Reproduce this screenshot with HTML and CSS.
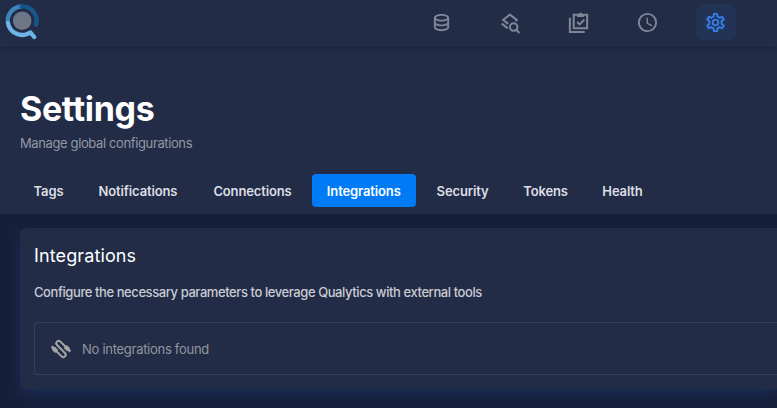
FILE: index.html
```html
<!DOCTYPE html>
<html lang="en">
<head>
<meta charset="utf-8">
<title>Settings</title>
<link rel="stylesheet" href="styles.css">
</head>
<body>
<header class="topbar">
  <svg class="logo" viewBox="0 0 44 44" fill="none" stroke-width="4.3">
    <defs><linearGradient id="core" x1="0" y1="0" x2="1" y2="1"><stop offset="0" stop-color="#66758d"/><stop offset="1" stop-color="#737780"/></linearGradient></defs>
    <circle cx="22.2" cy="20.7" r="9.3" fill="url(#core)"/>
    <path d="M8 23.2A14.2 14.2 0 0 1 21.5 6.5" stroke="#3e84bd"/>
    <path d="M21.5 6.5A14.2 14.2 0 0 1 36 24.8" stroke="#15578b" stroke-linecap="round"/>
    <path d="M8 23.2A14.2 14.2 0 0 0 26.5 34.2L30.5 32.5L34.2 37" stroke="#6eb5ea" stroke-linecap="round" stroke-linejoin="round"/>
  </svg>
  <nav class="nav">
    <a class="nav-item"><svg class="icon" viewBox="0 0 24 24"><path d="M12 3C7.58 3 4 4.79 4 7V17C4 19.21 7.59 21 12 21S20 19.21 20 17V7C20 4.79 16.42 3 12 3M18 17C18 17.5 15.87 19 12 19S6 17.5 6 17V14.77C7.61 15.55 9.72 16 12 16S16.39 15.55 18 14.77V17M18 12.45C16.7 13.4 14.42 14 12 14C9.58 14 7.3 13.4 6 12.45V9.64C7.47 10.47 9.61 11 12 11C14.39 11 16.53 10.47 18 9.64V12.45M12 9C8.13 9 6 7.5 6 7S8.13 5 12 5C15.87 5 18 6.5 18 7S15.87 9 12 9Z"/></svg></a>
    <a class="nav-item"><svg class="icon line" viewBox="0 0 24 24"><path d="M9.6 13.4L4.3 9.3L11.4 3.8L18.6 9.3L17.2 10.4M2.9 13.2L9.2 18.1"/><circle cx="15.3" cy="16.8" r="3.9"/><path d="M18 19.5L21.4 22.9"/></svg></a>
    <a class="nav-item"><svg class="icon line" viewBox="0 0 24 24"><path d="M7 4H21V18H7ZM3 7V22H18.5M10.6 11.4L13.2 14L18 9.2"/><path class="solid" d="M10.5 3H12.2A2 2 0 0 1 15.8 3H17.5V6.3H10.5Z"/></svg></a>
    <a class="nav-item"><svg class="icon" viewBox="0 0 24 24"><path d="M12,20A8,8 0 0,0 20,12A8,8 0 0,0 12,4A8,8 0 0,0 4,12A8,8 0 0,0 12,20M12,2A10,10 0 0,1 22,12A10,10 0 0,1 12,22C6.47,22 2,17.5 2,12A10,10 0 0,1 12,2M12.5,7V12.25L17,14.92L16.25,16.15L11,13V7H12.5Z"/></svg></a>
    <a class="nav-item active"><svg class="icon" viewBox="0 0 24 24"><path d="M12,8A4,4 0 0,1 16,12A4,4 0 0,1 12,16A4,4 0 0,1 8,12A4,4 0 0,1 12,8M12,10A2,2 0 0,0 10,12A2,2 0 0,0 12,14A2,2 0 0,0 14,12A2,2 0 0,0 12,10M10,22C9.75,22 9.54,21.82 9.5,21.58L9.13,18.93C8.5,18.68 7.96,18.34 7.44,17.94L4.95,18.95C4.73,19.03 4.46,18.95 4.34,18.73L2.34,15.27C2.21,15.05 2.27,14.78 2.46,14.63L4.57,12.97L4.5,12L4.57,11L2.46,9.37C2.27,9.22 2.21,8.95 2.34,8.73L4.34,5.27C4.46,5.05 4.73,4.96 4.95,5.05L7.44,6.05C7.96,5.66 8.5,5.32 9.13,5.07L9.5,2.42C9.54,2.18 9.75,2 10,2H14C14.25,2 14.46,2.18 14.5,2.42L14.87,5.07C15.5,5.32 16.04,5.66 16.56,6.05L19.05,5.05C19.27,4.96 19.54,5.05 19.66,5.27L21.66,8.73C21.79,8.95 21.73,9.22 21.54,9.37L19.43,11L19.5,12L19.43,13L21.54,14.63C21.73,14.78 21.79,15.05 21.66,15.27L19.66,18.73C19.54,18.95 19.27,19.04 19.05,18.95L16.56,17.95C16.04,18.34 15.5,18.68 14.87,18.93L14.5,21.58C14.46,21.82 14.25,22 14,22H10M11.25,4L10.88,6.61C9.68,6.86 8.62,7.5 7.85,8.39L5.44,7.35L4.69,8.65L6.8,10.2C6.4,11.37 6.4,12.64 6.8,13.8L4.68,15.36L5.43,16.66L7.86,15.62C8.63,16.5 9.68,17.14 10.87,17.38L11.24,20H12.76L13.13,17.39C14.32,17.14 15.37,16.5 16.14,15.62L18.57,16.66L19.32,15.36L17.2,13.81C17.6,12.64 17.6,11.37 17.2,10.2L19.31,8.65L18.56,7.35L16.15,8.39C15.38,7.5 14.32,6.86 13.12,6.62L12.75,4H11.25Z"/></svg></a>
  </nav>
</header>
<section class="heading">
  <h1>Settings</h1>
  <p class="subtitle">Manage global configurations</p>
  <nav class="tabs">
    <a class="tab">Tags</a>
    <a class="tab">Notifications</a>
    <a class="tab">Connections</a>
    <a class="tab selected">Integrations</a>
    <a class="tab">Security</a>
    <a class="tab">Tokens</a>
    <a class="tab">Health</a>
  </nav>
</section>
<main class="content">
  <section class="card">
    <h2>Integrations</h2>
    <p class="description">Configure the necessary parameters to leverage Qualytics with external tools</p>
    <div class="empty">
      <svg class="cable" viewBox="-11 -11 22 22"><g transform="rotate(-45)"><path class="cord" d="M4.8 2V-5.6A2.4 2.4 0 0 0 0 -5.6V5.6A2.4 2.4 0 0 1 -4.8 5.6V-2"/><path d="M2.6 1.2H7V5.6L6.1 6.5V8.4H3.5V6.5L2.6 5.6ZM-2.6 -1.2H-7V-5.6L-6.1 -6.5V-8.4H-3.5V-6.5L-2.6 -5.6Z"/></g></svg>
      <span class="empty-text">No integrations found</span>
    </div>
  </section>
</main>
</body>
</html>
```
FILE: styles.css
```css
* { box-sizing: border-box; }
body { margin: 0; height: 408px; overflow: hidden; background: #161f3a; font-family: Inter, "Liberation Sans", sans-serif; color: #fff; }
h1, h2, p { margin: 0; }
.topbar { position: relative; display: flex; justify-content: space-between; height: 47px; padding-right: 41px; background: #222c47; box-shadow: 0 1px 5px rgba(15, 22, 44, .45); }
.logo { width: 44px; height: 44px; }
.nav { display: flex; gap: 28.5px; padding-top: 4px; }
.nav-item { display: flex; align-items: center; justify-content: center; width: 40px; height: 36px; border-radius: 7px; color: #7f8698; }
.nav-item.active { background: #233355; color: #347ee8; }
.icon { width: 23px; height: 23px; margin-right: 1px; fill: currentColor; }
.line { fill: none; stroke: currentColor; stroke-width: 2.1; }
.solid { fill: currentColor; stroke: none; }
.heading { height: 167px; padding: 39px 20px 0; background: #222c47; }
h1 { font-size: 34px; line-height: 46px; font-weight: 700; letter-spacing: -.35px; }
.subtitle { margin-top: 1px; font-size: 13px; line-height: 20px; letter-spacing: -.38px; color: #9297a5; }
.tabs { display: grid; grid-template-columns: 57px 110px 107px 103.5px 82px 72px 70px; gap: 6px; margin-top: 21px; }
.tab { height: 33px; border-radius: 4px; font-size: 13px; line-height: 34px; font-weight: 600; letter-spacing: -.13px; text-align: center; color: #dcdee3; white-space: nowrap; }
.selected { background: #007bf5; color: #fff; }
.content { padding: 14px 0 0 20px; }
.card { height: 161px; padding: 14px 0 0 14px; border-radius: 6px 0 0 6px; background: #222c47; box-shadow: 0 5px 14px rgba(31, 55, 110, .6); clip-path: inset(0 0 -20px -20px); }
h2 { font-size: 18px; line-height: 27px; font-weight: 400; letter-spacing: .12px; }
.description { margin-top: 13px; font-size: 13px; line-height: 20px; font-weight: 500; letter-spacing: -.42px; color: #c8cbd2; white-space: nowrap; }
.empty { display: flex; align-items: center; gap: 10px; height: 53px; margin-top: 20px; padding-left: 15px; border: 1px solid #364059; border-right: 0; border-radius: 4px 0 0 4px; color: #92969f; }
.cable { width: 22px; height: 22px; fill: #a5a5a5; }
.cord { fill: none; stroke: #a5a5a5; stroke-width: 2; }
.empty-text { font-size: 13px; letter-spacing: -.28px; }
```
